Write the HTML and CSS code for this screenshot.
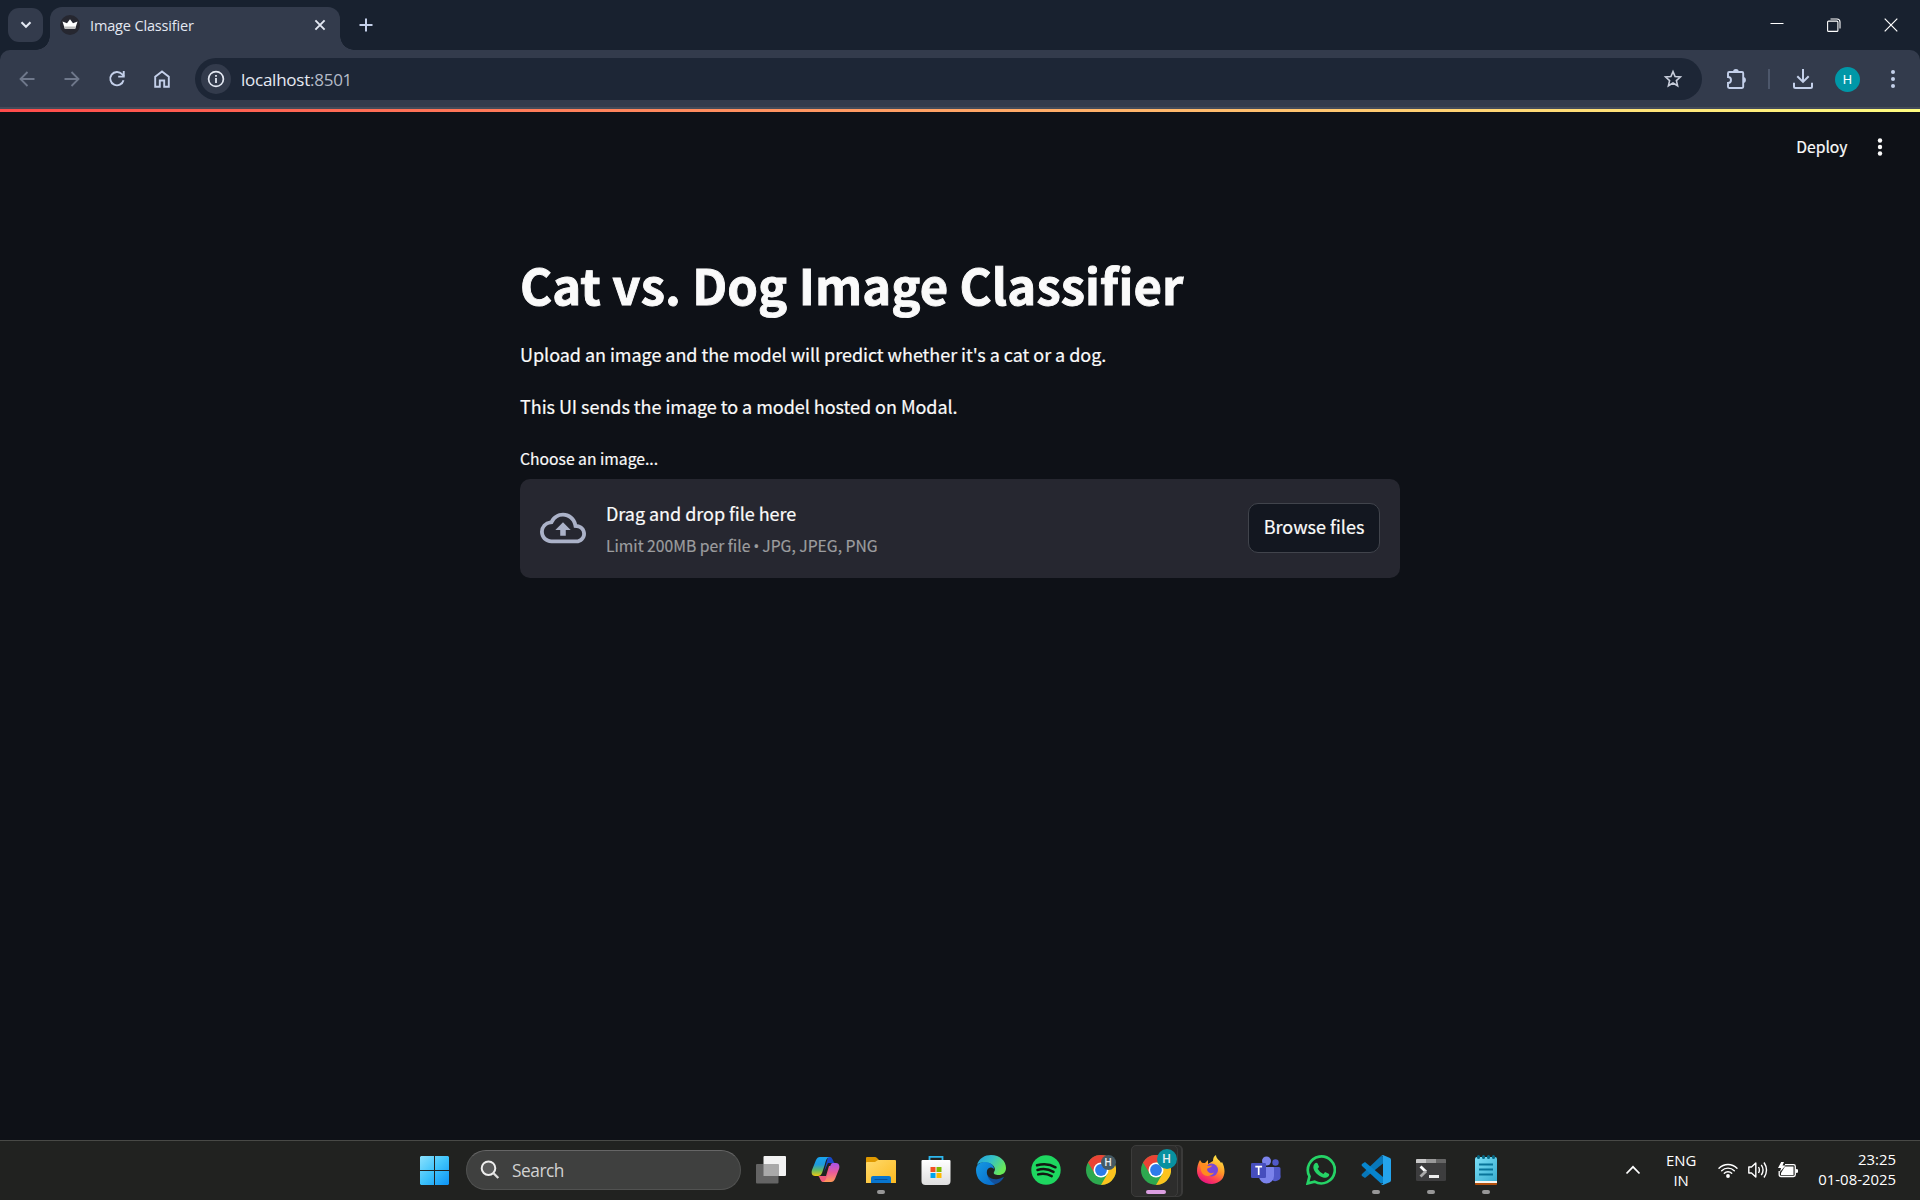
FILE: index.html
```html
<!DOCTYPE html>
<html lang="en">
<head>
<meta charset="utf-8">
<title>Image Classifier</title>
<link rel="stylesheet" href="styles.css">
</head>
<body>
<header class="tabstrip">
  <div class="tab-search"><svg width="12" height="8" viewBox="0 0 12 8"><path d="M1.500 1.200 6 5.700l4.500-4.500" fill="none" stroke="#e3e8f2" stroke-width="2.100"/></svg></div>
  <div class="tab">
    <svg class="favicon" width="20" height="20" viewBox="0 0 20 20"><circle cx="10" cy="10" r="10" fill="#262730"/><path d="M2.500 6.500 7 8.300l3-4 3 4 4.500-1.800-2.300 7.200H4.800z" fill="#fff"/><path d="M4.200 11.600h11.600l-.6 2.100H4.800z" fill="#bbb"/></svg>
    <span class="tab-title">Image Classifier</span>
    <svg class="tab-close" width="12" height="12" viewBox="0 0 12 12"><path d="m1.400 1.400 9.200 9.200m0-9.200-9.200 9.200" stroke="#e3e8f2" stroke-width="1.900"/></svg>
  </div>
  <svg class="new-tab" width="14" height="14" viewBox="0 0 14 14"><path d="M7 .5v13M.5 7h13" stroke="#c4d0ea" stroke-width="2"/></svg>
  <div class="window-controls">
    <svg width="14" height="14" viewBox="0 0 14 14"><path d="M.5 5.500h13" stroke="#fff"/></svg>
    <svg width="14" height="14" viewBox="0 0 14 14"><path d="M3.500 1h6.500a3 3 0 0 1 3 3v6.500" fill="none" stroke="#fff" stroke-width="1.100"/><rect x=".6" y="3.100" width="10.300" height="10.300" rx="1" fill="none" stroke="#fff" stroke-width="1.100"/></svg>
    <svg width="14" height="14" viewBox="0 0 14 14"><path d="m.7.7 12.600 12.600m0-12.600L.7 13.300" stroke="#fff" stroke-width="1.200"/></svg>
  </div>
</header>
<nav class="toolbar">
  <div class="nav-buttons">
    <svg width="20" height="20" viewBox="0 0 20 20"><path d="M17.500 10H4M10.500 3 3.500 10l7 7" fill="none" stroke="#6f788b" stroke-width="1.800"/></svg>
    <svg width="20" height="20" viewBox="0 0 20 20"><path d="M2.500 10H16M9.500 3l7 7-7 7" fill="none" stroke="#6f788b" stroke-width="1.800"/></svg>
    <svg width="20" height="20" viewBox="0 0 20 20"><path d="M16.500 11.300A6.700 6.700 0 1 1 15 5.200l2 2.200" fill="none" stroke="#c4d0ea" stroke-width="1.900"/><path d="M17.700 2v6.600h-6.500V6.700h4.600V2z" fill="#c4d0ea"/></svg>
    <svg width="20" height="20" viewBox="0 0 20 20"><path d="M3.200 17.700V7.800L10 2.500l6.800 5.300v9.900h-4.600v-6.200H7.800v6.200z" fill="none" stroke="#c4d0ea" stroke-width="1.900"/></svg>
  </div>
  <div class="omnibox">
    <div class="site-info"><svg width="18" height="18" viewBox="0 0 18 18"><circle cx="9" cy="9" r="7.400" fill="none" stroke="#e3e8f2" stroke-width="1.700"/><path d="M9 8v5M9 5v1.800" stroke="#e3e8f2" stroke-width="1.800"/></svg></div>
    <span class="url">localhost<span class="port">:8501</span></span>
    <svg class="star" width="20" height="20" viewBox="0 0 20 20"><path d="m10 2.600 2.100 4.900 5.300.5-4 3.600 1.200 5.200-4.600-2.800-4.600 2.800 1.200-5.200-4-3.600 5.300-.5z" fill="none" stroke="#c8cddb" stroke-width="1.600"/></svg>
  </div>
  <svg class="extensions" width="22" height="22" viewBox="0 0 22 22"><path d="M2 5.200Q2 4 3.200 4H16q1.200 0 1.200 1.200v13.600q0 1.200-1.200 1.200H3.200Q2 20 2 18.800V15a3 3 0 0 0 0-6z" fill="none" stroke="#c4d0ea" stroke-width="1.900"/><path d="M7 4a2.900 2.900 0 0 1 5.800 0zm10 5a2.900 2.900 0 0 1 0 5.800z" fill="#c4d0ea"/></svg>
  <i class="divider"></i>
  <svg class="download" width="22" height="22" viewBox="0 0 22 22"><path d="M11 1v12.500M5.300 8.200l5.700 5.700 5.700-5.700M2 14.800v3.700q0 1.500 1.500 1.500h15q1.500 0 1.500-1.500v-3.700" fill="none" stroke="#c4d0ea" stroke-width="2"/></svg>
  <span class="avatar">H</span>
  <svg class="menu" width="6" height="20" viewBox="0 0 6 20"><g fill="#c4d0ea"><circle cx="3" cy="3.100" r="2"/><circle cx="3" cy="10" r="2"/><circle cx="3" cy="16.900" r="2"/></g></svg>
</nav>
<main class="app">
  <div class="decoration"></div>
  <div class="app-header">
    <span class="deploy">Deploy</span>
    <svg width="6" height="18" viewBox="0 0 6 18"><g fill="#fafafa"><circle cx="3" cy="2.500" r="2.200"/><circle cx="3" cy="9" r="2.200"/><circle cx="3" cy="15.500" r="2.200"/></g></svg>
  </div>
  <section class="block">
    <h1>Cat vs. Dog Image Classifier</h1>
    <p class="p1">Upload an image and the model will predict whether it's a cat or a dog.</p>
    <p class="p2">This UI sends the image to a model hosted on Modal.</p>
    <label class="label">Choose an image...</label>
    <div class="dropzone">
      <svg width="46" height="46" viewBox="0 0 24 24"><path fill="#abb2c8" d="M19.350 10.040A7.490 7.490 0 0 0 12 4C9.110 4 6.600 5.640 5.350 8.040A5.994 5.994 0 0 0 0 14c0 3.310 2.690 6 6 6h13c2.760 0 5-2.240 5-5 0-2.640-2.050-4.780-4.650-4.960zM19 18H6c-2.210 0-4-1.790-4-4 0-2.050 1.530-3.760 3.560-3.970l1.070-.11.5-.95A5.469 5.469 0 0 1 12 6c2.620 0 4.880 1.860 5.390 4.430l.3 1.500 1.530.11A2.980 2.980 0 0 1 22 15c0 1.650-1.350 3-3 3zM8 13h2.550v3h2.900v-3H16l-4-4z"/></svg>
      <div class="instructions">
        <span class="drag">Drag and drop file here</span>
        <span class="limit">Limit 200MB per file <span class="bullet">•</span> JPG, JPEG, PNG</span>
      </div>
      <button class="browse">Browse files</button>
    </div>
  </section>
</main>
<footer class="taskbar">
  <div class="start"><svg width="29" height="29" viewBox="0 0 29 29"><defs><linearGradient id="win" x1="0" y1="0" x2="29" y2="29" gradientUnits="userSpaceOnUse"><stop stop-color="#8be1fd"/><stop offset=".5" stop-color="#3ec3fb"/><stop offset="1" stop-color="#0c93f5"/></linearGradient></defs><path d="M1 0h13v14H0V1zm14 0h13l1 1v13H15zM0 15h14v14H1l-1-1zm15 0h14v13l-1 1H15z" fill="url(#win)"/></svg></div>
  <div class="search"><svg width="20" height="20" viewBox="0 0 20 20"><circle cx="8.500" cy="8.200" r="6.800" fill="#5a5b5b" stroke="#eee" stroke-width="2"/><path d="m13.300 13 5 5" stroke="#ddd" stroke-width="2.400"/></svg><span>Search</span></div>
  <div class="apps">
    <div class="app-icon"><svg width="30" height="30" viewBox="0 0 30 30"><rect x="7.500" y="1" width="22.500" height="20" rx="1" fill="#f2f2f2"/><rect x="0" y="9" width="22.500" height="19.500" rx="1" fill="#646464"/><path d="M7.500 9h15v12h-15z" fill="#a9a9a9"/></svg></div>
    <div class="app-icon"><svg width="30" height="30" viewBox="0 0 30 30"><defs><linearGradient id="cpa" x1="0" y1="0" x2="0" y2="1"><stop stop-color="#18a4ef"/><stop offset=".4" stop-color="#209bdc"/><stop offset=".7" stop-color="#65ba63"/><stop offset="1" stop-color="#f0c810"/></linearGradient><linearGradient id="cpb" x1="0" y1="0" x2="0" y2="1"><stop stop-color="#a753eb"/><stop offset=".5" stop-color="#e95c9a"/><stop offset="1" stop-color="#ff9a56"/></linearGradient></defs><path d="M17 2h2c3 0 3 6 5 6h-7l-4 9z" fill="#1748c9"/><path d="M12 27c-3 0-3-6-5-6h8l3-10h5l-4 12c-1 3-3 4-5 4z" fill="#f2597b"/><path d="M9 2h10c-3 0-4 3-5 7l-3 9c-1 2-2 3-4 3H4c-3 0-4-3-3-6L5 5c1-2 2-3 4-3z" fill="url(#cpa)"/><path d="M22 8h3c3 0 4 3 3 6l-4 10c-1 2-2 3-4 3h-9c3 0 4-3 5-6l3-9c1-3 1-4 3-4z" fill="url(#cpb)"/></svg></div>
    <div class="app-icon running"><svg width="30" height="30" viewBox="0 0 30 30"><defs><linearGradient id="fold" x1="0" y1="0" x2="1" y2="1"><stop stop-color="#ffda6c"/><stop offset="1" stop-color="#fcba20"/></linearGradient></defs><path d="M0 3q0-1 1-1h8q1 0 2 1l2 2v3H0z" fill="#df9900"/><path d="M0 8q0-1 1-1h8l3-2h17q1 0 1 1v22H0z" fill="url(#fold)"/><path d="M5 28v-5q0-2 2-2h16q2 0 2 2v5z" fill="#0875ce"/><path d="M9 24.500h12" stroke="#07509a" stroke-width="1.200" stroke-linecap="round"/></svg></div>
    <div class="app-icon"><svg width="30" height="30" viewBox="0 0 30 30"><defs><linearGradient id="bag" x1="0" y1="0" x2="0" y2="1"><stop stop-color="#fff"/><stop offset="1" stop-color="#dedede"/></linearGradient></defs><path d="M8.500 6V1.800h13V6" fill="none" stroke="#2db7ed" stroke-width="1.800"/><path d="M.5 6q0-1 1-1h27q1 0 1 1v20q0 4-4 4h-21q-4 0-4-4z" fill="url(#bag)"/><path d="M9.500 12h5v5h-5z" fill="#f25022"/><path d="M15.500 12h5v5h-5z" fill="#7fba00"/><path d="M9.500 18h5v5h-5z" fill="#00a4ef"/><path d="M15.500 18h5v5h-5z" fill="#ffb900"/></svg></div>
    <div class="app-icon"><svg width="30" height="30" viewBox="0 0 30 30"><defs><linearGradient id="edg" x1="0" y1="0" x2="1" y2=".5"><stop stop-color="#219fe0"/><stop offset=".5" stop-color="#35c1c6"/><stop offset="1" stop-color="#68e858"/></linearGradient><linearGradient id="edb" x1="0" y1="0" x2="1" y2="1"><stop stop-color="#159ae4"/><stop offset="1" stop-color="#0869c9"/></linearGradient></defs><path d="M9.500 11C9 22 15 25 22 24c3-.5 5-2 6-2-3 6-9 8-14 8C7 29 5 20 9.500 11z" fill="#12509b"/><path d="M1 10C3 3 9 0 15 0c9 0 15 6 15 13 0 5-4 7-7 7-4 0-6-1-5-3 2-2 1-7-5-9C8 7 3 7 1 10z" fill="url(#edg)"/><path d="M0 15C0 9 5 7 9 7c5 0 9 3 9 7-5-4-8 1-7 5 1 6 6 9 8 10.500C8 32 0 25 0 15z" fill="url(#edb)"/></svg></div>
    <div class="app-icon"><svg width="30" height="30" viewBox="0 0 30 30"><circle cx="15" cy="15" r="14.700" fill="#1ed760"/><path d="M6 10.300c6-1.700 13-1.200 18.500 2M6.500 15c5.500-1.600 11-1 16 1.900M7.200 19.400c4.800-1.300 9-.8 13.500 1.700" fill="none" stroke="#121712" stroke-width="2.500" stroke-linecap="round"/></svg></div>
    <div class="app-icon"><svg width="30" height="30" viewBox="0 0 30 30"><g id="chrome"><circle cx="15" cy="15" r="15" fill="#2da94f"/><path d="M2 7.500A15 15 0 0 1 28 7.500H15L9 19z" fill="#ea4335"/><path d="M15 7.500h13A15 15 0 0 1 15 30l6.500-11.200z" fill="#fcc31e"/><circle cx="15" cy="15" r="7.500" fill="#fff"/><circle cx="15" cy="15" r="5.900" fill="#2c7be9"/></g></svg><b class="profile gray">H</b></div>
    <div class="app-icon active"><svg width="30" height="30" viewBox="0 0 30 30"><use href="#chrome"/></svg><b class="profile teal">H</b></div>
    <div class="app-icon"><svg width="30" height="30" viewBox="0 0 30 30"><defs><linearGradient id="ffx" x1=".8" y1="0" x2=".3" y2="1"><stop stop-color="#fff04a"/><stop offset=".45" stop-color="#ff9826"/><stop offset=".75" stop-color="#ff4055"/><stop offset="1" stop-color="#e40f85"/></linearGradient></defs><path d="M4 5l2 3h3l3-3v4l5-3c0-3 1-5 3-6 0 4 4 5 5 8l1-1c5 9 3 21-10 22C7 29 1 23 1 16c0-4 1-8 3-11z" fill="url(#ffx)"/><circle cx="15.500" cy="15" r="6.500" fill="#7a48d8"/><path d="M3 8c4-1 7 0 9 3l4-.5c-1 3-5 1.500-5 4.500 1 3 4 4 7 2.500-2 4-9 5-12 .5-2-3-1-7-3-10z" fill="#ff8b20"/></svg></div>
    <div class="app-icon"><svg width="30" height="30" viewBox="0 0 30 30"><circle cx="24.500" cy="7.500" r="3.200" fill="#5059c9"/><circle cx="15.500" cy="6" r="4.500" fill="#7b83eb"/><path d="M20 12h8q1.500 0 1.500 1.500V20a5 5 0 0 1-9.500 3z" fill="#5059c9"/><path d="M8 12h14q1 0 1 1v8a7.500 7.500 0 0 1-15 0z" fill="#7b83eb"/><rect y="8" width="15" height="15" rx="1.300" fill="#464ebd"/><path d="M4.300 11.700h6.800M7.700 12v8" stroke="#fff" stroke-width="1.700"/></svg></div>
    <div class="app-icon"><svg width="30" height="30" viewBox="0 0 30 30"><path d="M1.700 28.400l1.800-7A13.500 13.500 0 1 1 8.600 26.600z" fill="none" stroke="#25d366" stroke-width="2.700"/><path d="M9 8.300q1.300-1.300 2.500 0l1.500 3.400q-.2 1-1.400 2 2.300 4 5.800 5.200l1.700-1.800 4 1.900c.5 3-3 4.300-5.200 3.700-6-1.500-10.300-6.300-10.600-10.400q0-2.500 1.700-4z" fill="#25d366"/></svg></div>
    <div class="app-icon running"><svg width="30" height="30" viewBox="0 0 30 30"><path d="m22 8.500-18 14.500-3-2q-1-1 0-2L20 1l2 .5z" fill="#0877b9"/><path d="M1 9q-1 1 0 2l19 17.500 2-.5v-6L4 7z" fill="#0785cd"/><path d="m22 0 7 3q1 .5 1 2v20q0 1.500-1 2l-7 3q-1 .2-2-1 2 1 2-1V2q0-2-2-1 1-1 2-1z" fill="#24a4ed"/></svg></div>
    <div class="app-icon running"><svg width="30" height="30" viewBox="0 0 30 30"><rect y="4" width="30" height="22" rx="1.300" fill="#3d3d3e"/><path d="M0 8V5q0-1 1-1h19v4z" fill="#c8c8c8"/><path d="M10 4h10v4H10z" fill="#999"/><path d="M20 4h9q1 0 1 1v3H20z" fill="#666"/><path d="m4.500 11.500 5.500 5.200" stroke="#fff" stroke-width="2.800"/><path d="m10 16.200-5.500 5.300" stroke="#aaa" stroke-width="2.800"/><path d="M13 20h10v3H13z" fill="#eee"/></svg></div>
    <div class="app-icon running"><svg width="30" height="30" viewBox="0 0 30 30"><defs><linearGradient id="note" x1="0" y1="0" x2="1" y2="1"><stop stop-color="#7bdff7"/><stop offset="1" stop-color="#39add0"/></linearGradient></defs><path d="M4 26h22v3q0 1-1 1H5q-1 0-1-1z" fill="#b4500c"/><path d="M4 24h22v4H4z" fill="#f4f4ef"/><path d="M4 4q0-2 2-2h18q2 0 2 2v22H4z" fill="url(#note)"/><path d="M8 9.500h14M8 14.500h14M8 19.500h14" stroke="#08749a" stroke-width="1.800"/><path d="M7.500 1.500v1m5-1v1m5-1v1m5-1v1" stroke="#086783" stroke-width="3" stroke-linecap="round"/></svg></div>
  </div>
  <div class="tray">
    <svg class="chevron" width="16" height="10" viewBox="0 0 16 10"><path d="m1.500 8.500 6.500-6.700 6.500 6.700" fill="none" stroke="#fff" stroke-width="1.700"/></svg>
    <div class="lang"><span>ENG</span><span>IN</span></div>
    <svg class="wifi" width="20" height="16" viewBox="0 0 20 16"><path d="M1 6.300a12.500 12.500 0 0 1 18 0M3.700 8.800a8.800 8.800 0 0 1 12.600 0M6.300 11.300a5.200 5.200 0 0 1 7.400 0" fill="none" stroke="#fff" stroke-width="1.400" stroke-linecap="round"/><circle cx="10" cy="14" r="1.900" fill="#fff"/></svg>
    <svg class="sound" width="20" height="18" viewBox="0 0 20 18"><path d="M.8 6v6h2.700l4.300 4V2L3.500 6zM10.500 6q1.800 3 0 6M13.300 3.800q3.500 5.200 0 10.400M16 1.500q5 7.500 0 15" fill="none" stroke="#fff" stroke-width="1.400" stroke-linejoin="round"/></svg>
    <svg class="battery" width="20" height="16" viewBox="0 0 20 16"><path d="M7 2.700h8.500q1.800 0 1.800 1.800v8.200q0 1.800-1.800 1.800H3q-1.800 0-1.800-1.800V9" fill="none" stroke="#fff" stroke-width="1.300"/><path d="M7 4.500h8.500V13H3v-2zm11-.2V7l2 .6v2.800l-2 .6zM3.200 0H6L4.500 3.500h3L2 10l1-4H0z" fill="#fff"/></svg>
    <div class="clock"><span class="time">23:25</span><span class="date">01-08-2025</span></div>
  </div>
</footer>
</body>
</html>
```
FILE: styles.css
```css
* { box-sizing: border-box; }
body {
  margin: 0;
  width: 1920px;
  height: 1200px;
  overflow: hidden;
  display: flex;
  flex-direction: column;
  background: #18212f;
  font-family: "Open Sans", "Noto Sans", sans-serif;
  color: #fff;
}
svg { display: block; flex: none; }

/* Browser tab strip */
.tabstrip {
  height: 50px;
  display: flex;
  padding-left: 8px;
}
.tab-search {
  width: 35px;
  height: 34px;
  margin-top: 8px;
  border-radius: 11px;
  background: #333b4c;
  display: grid;
  place-items: center;
}
.tab {
  position: relative;
  width: 290px;
  height: 43px;
  margin: 7px 0 0 7px;
  padding: 0 14px 5px 10px;
  border-radius: 12px 12px 0 0;
  background: #333b4c;
  display: flex;
  align-items: center;
}
.tab::before, .tab::after {
  content: "";
  position: absolute;
  bottom: 0;
  width: 14px;
  height: 14px;
}
.tab::before { left: -14px; background: radial-gradient(circle at 0 0, transparent 13.500px, #333b4c 14px); }
.tab::after { right: -14px; background: radial-gradient(circle at 100% 0, transparent 13.500px, #333b4c 14px); }
.favicon { margin-bottom: 2px; }
.tab-title {
  margin-left: 10px;
  padding-bottom: 2px;
  flex: 1;
  font-size: 14.500px;
  letter-spacing: -0.150px;
  color: #e3e8f2;
  white-space: nowrap;
}
.tab-close { margin: 0 0 2px; }
.new-tab { margin: 18px 0 0 19px; }
.window-controls {
  margin: 18px 22px 0 auto;
  display: flex;
  gap: 43.500px;
}
.window-controls svg:first-child { margin-right: -1px; }

/* Browser toolbar */
.toolbar {
  height: 59px;
  display: flex;
  align-items: center;
  padding-top: 1px;
  background: linear-gradient(#333b4c 57px, #444b59 57px);
  border-radius: 10px 10px 0 0;
  padding-bottom: 2px;
}
.nav-buttons {
  display: flex;
  gap: 25px;
  padding-left: 17px;
}
.nav-buttons svg, .extensions, .download { margin-bottom: 1px; }
.omnibox {
  width: 1507px;
  height: 42px;
  margin-left: 23px;
  padding: 0 19px 0 6px;
  border-radius: 21px;
  background: #1d2636;
  display: flex;
  align-items: center;
}
.site-info {
  width: 30px;
  height: 30px;
  border-radius: 50%;
  background: #333b4c;
  display: grid;
  place-items: center;
}
.url {
  margin-left: 10px;
  flex: 1;
  font-size: 17px;
  letter-spacing: -0.250px;
  color: #e6eaf3;
}
.port { color: #b4bac7; }
.extensions { margin-left: 24px; }
.divider { width: 2px; height: 20px; margin-left: 20px; background: #4d576b; }
.download { margin-left: 22px; }
.avatar {
  width: 25px;
  height: 25px;
  margin-left: 21px;
  border-radius: 50%;
  background: #0097a7;
  font: 13px/25px Roboto, sans-serif;
  text-align: center;
}
.menu { margin-left: 29.500px; }

/* Application page */
.app {
  height: 1031px;
  background: #0e1117;
  font-family: "Noto Sans CJK SC", "Noto Sans CJK JP", sans-serif;
  color: #fafafa;
  -webkit-text-stroke: 0.200px;
}
.decoration { height: 3px; background: linear-gradient(90deg, #ff4b4b, #fffd80); }
.app-header {
  height: 75px;
  padding: 0 37px 6px 0;
  display: flex;
  justify-content: flex-end;
  align-items: center;
  gap: 29.500px;
}
.deploy { font-size: 15.700px; }
.block { width: 880px; margin: 64px auto 0; }
h1 {
  margin: 0;
  font-size: 49px;
  line-height: 66px;
  font-weight: 700;
  letter-spacing: 0.100px;
  white-space: nowrap;
  -webkit-text-stroke: 0.900px;
}
p { margin: 0; font-size: 18px; line-height: 32px; letter-spacing: -0.040px; }
.p1 { margin-top: 21px; }
.p2 { margin-top: 20px; }
.label { display: block; margin-top: 25px; font-size: 15.700px; line-height: 24px; }
.dropzone {
  height: 99px;
  margin-top: 8px;
  padding: 0 20px 2px;
  border-radius: 10px;
  background: #262730;
  display: flex;
  align-items: center;
}
.instructions { display: flex; flex-direction: column; margin-left: 20px; padding-top: 2px; flex: 1; }
.drag { font-size: 18px; line-height: 30px; letter-spacing: -0.040px; }
.limit { margin-top: 5px; font-size: 15.700px; line-height: 26px; color: #9c9d9f; }
.bullet { font-family: "Noto Sans", sans-serif; font-size: 15px; line-height: 1; margin: 0 -0.400px; }
.browse {
  width: 132px;
  height: 50px;
  padding: 0 0 3px;
  border: 1px solid #41444c;
  border-radius: 10px;
  background: #131720;
  color: #fafafa;
  font: 18px "Noto Sans CJK SC", sans-serif;
  -webkit-text-stroke: 0.200px;
}

/* Desktop taskbar */
.taskbar {
  height: 60px;
  display: flex;
  align-items: center;
  padding: 0 0 1px 420px;
  background: #212220;
  border-top: 1px solid #484946;
}
.start { padding-top: 1px; }
.search {
  width: 275px;
  height: 40px;
  margin-left: 17px;
  padding-left: 13px;
  border: 1px solid #515251;
  border-top-color: #666;
  border-radius: 20px;
  background: #3f403f;
  display: flex;
  align-items: center;
  gap: 12px;
  font-size: 17.300px;
  color: #d2d2d2;
}
.search span { letter-spacing: -0.450px; }
.apps { display: flex; margin-left: 2.500px; }
.app-icon {
  position: relative;
  width: 55px;
  height: 50px;
  display: grid;
  place-items: center;
}
.running::after, .active::after {
  content: "";
  position: absolute;
  bottom: 1px;
  left: 23.500px;
  width: 8px;
  height: 4px;
  border-radius: 2px;
  background: #979797;
}
.active::after { left: 17.500px; width: 20px; background: #dc9fe2; }
.active::before {
  content: "";
  position: absolute;
  left: 2.500px;
  top: 0;
  width: 45px;
  height: 50px;
  border: 1px solid #3c3c3b;
  border-radius: 5px;
  background: #2d2d2c;
  box-shadow: 4px 0 0 -1px #2a2a29, 5px 0 0 0 #3a3a39;
}
.active svg { position: relative; }
.profile {
  position: absolute;
  border-radius: 50%;
  color: #e8eef0;
  font-family: Roboto, sans-serif;
  font-weight: 500;
  text-align: center;
}
.gray { left: 27px; top: 10px; width: 15px; height: 15px; font-size: 10px; line-height: 15px; background: #455a64; }
.teal { left: 28px; top: 4px; width: 20px; height: 20px; font-size: 12px; line-height: 20px; background: #0891a0; }
.tray {
  margin: 0 24px 0 auto;
  display: flex;
  align-items: center;
  font-size: 14.900px;
  line-height: 20px;
}
.lang { display: flex; flex-direction: column; align-items: center; margin-left: 25px; }
.wifi { margin-left: 22px; }
.sound { margin-left: 10px; }
.battery { margin-left: 10px; }
.clock { display: flex; flex-direction: column; align-items: flex-end; margin-left: 20px; padding-bottom: 2px; }
```
